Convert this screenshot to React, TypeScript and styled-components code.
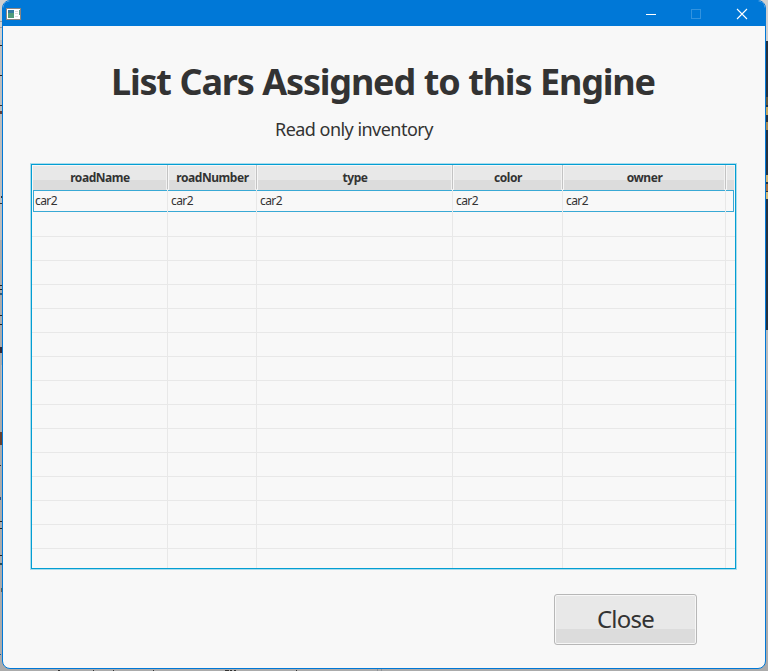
import React from "react";
import styled, { createGlobalStyle } from "styled-components";

const Global = createGlobalStyle`
  * { box-sizing: border-box; }
  body { margin: 0; overflow: hidden; background: #ababab; }
`;

const Desktop = styled.div`
  position: relative;
  width: 768px;
  height: 671px;
  padding: 0 2px 2px;
  overflow: hidden;
  background: #ababab;
  font-family: "Noto Sans", "Open Sans", sans-serif;
  color: #333;
`;

const Backdrop = styled.svg`
  position: absolute;
  inset: 0;
`;

const Window = styled.div`
  position: relative;
  display: flex;
  flex-direction: column;
  width: 764px;
  height: 669px;
  border: 1px solid #0078d7;
  border-radius: 8px;
  overflow: hidden;
  background: #f8f8f8;
`;

const TitleBar = styled.header`
  display: flex;
  align-items: center;
  justify-content: space-between;
  flex: none;
  height: 25px;
  padding-left: 3px;
  background: #0078d7;
`;

const Controls = styled.div`
  display: flex;
`;

const ControlButton = styled.button<{ $dim?: boolean }>`
  display: grid;
  place-items: center;
  width: ${(p) => (p.$dim ? "45px" : "46px")};
  height: 25px;
  padding: 0;
  border: 0;
  background: none;
  color: ${(p) => (p.$dim ? "#3293df" : "#fff")};
`;

const Content = styled.main`
  display: flex;
  flex-direction: column;
  flex: 1;
  padding-left: 28px;
`;

const Heading = styled.h1`
  width: max-content;
  margin: 31px 0 0 80px;
  font-size: 36px;
  line-height: 50px;
  font-weight: 700;
  letter-spacing: -1.2px;
  word-spacing: 0.6px;
  white-space: nowrap;
`;

const Note = styled.p`
  width: max-content;
  margin: 9px 0 0 244px;
  font-size: 18px;
  line-height: 26px;
  letter-spacing: -0.53px;
  white-space: nowrap;
`;

const Table = styled.div`
  display: flex;
  flex-direction: column;
  width: 705px;
  height: 405px;
  margin-top: 22px;
  border: 1px solid #039ed3;
  box-shadow: 0 0 0 1px #aadcec;
  overflow: hidden;
`;

const columns = "136px 89px 196px 110px 163px 9px";

const HeaderRow = styled.div`
  display: grid;
  grid-template-columns: ${columns};
  flex: none;
  height: 24px;
  border-bottom: 1px solid #c8c4c8;
`;

const HeaderCell = styled.div`
  padding-left: 1px;
  border-right: 1px solid #c3c3c3;
  box-shadow: inset 1px 1px #f7f7f7, inset -1px 0 #f2f2f2;
  background: linear-gradient(#e8e8e8 0 15px, #dcdcdc 15px);
  font-size: 12px;
  line-height: 25px;
  font-weight: 700;
  text-align: center;
  letter-spacing: -0.45px;
  &:last-child { border-right: 0; }
`;

const Row = styled.div<{ $focused?: boolean }>`
  display: grid;
  grid-template-columns: ${columns};
  flex: none;
  height: 24px;
  background: ${(p) =>
    p.$focused
      ? `linear-gradient(#39a9d5, #39a9d5) 1px 1px / 701px 1px no-repeat,
         linear-gradient(#39a9d5, #39a9d5) 1px 22px / 701px 1px no-repeat,
         linear-gradient(#39a9d5, #39a9d5) 1px 1px / 1px 22px no-repeat,
         linear-gradient(#39a9d5, #39a9d5) 701px 1px / 1px 22px no-repeat`
      : "linear-gradient(#e8e8e8, #e8e8e8) 0 23px / 100% 1px no-repeat"};
`;

const Cell = styled.div`
  padding-left: 3px;
  border-right: 1px solid #e8e8e8;
  font-size: 12px;
  line-height: 24px;
  letter-spacing: -0.6px;
  &:last-child { border-right: 0; }
`;

const CloseButton = styled.button`
  width: 143px;
  height: 51px;
  margin: 25px 0 0 523px;
  padding: 0 0 1px;
  border: 1px solid #b7b7b7;
  border-radius: 3px;
  box-shadow: inset 0 0 0 1px #f7f7f7;
  background: linear-gradient(#e8e8e8 0 34px, #dcdcdc 34px);
  color: #333;
  font-family: inherit;
  font-size: 24px;
  line-height: 46px;
  letter-spacing: -0.75px;
`;

const AppIcon = () => (
  <svg width="15" height="12" viewBox="0 0 15 12" shapeRendering="crispEdges">
    <path fill="#8a8582" d="M0 0h15v12H0z" />
    <path fill="#fff" d="M1 1h13v10H1z" />
    <path fill="#3379a0" d="M2 2h6v8H2z" />
    <path fill="#4f9b79" d="M2 5h6v5H2z" />
    <path fill="#ddd" d="M9 3h3v1H9zM9 5h3v1H9zM9 8h3v1H9z" />
    <path fill="#579b88" d="M13 2h1v5h-1z" />
  </svg>
);

const marks: [number, number, number, number, string][] = [
  [0, 21, 2, 1, "#999"], [0, 27, 2, 1, "#999"],
  [0, 45, 2, 1, "#222"], [0, 75, 2, 1, "#222"], [0, 105, 2, 1, "#333"],
  [0, 111, 2, 3, "#63403a"], [1, 196, 1, 2, "#333"], [0, 203, 2, 1, "#333"],
  [0, 259, 1, 5, "#9fb5b5"],
  [0, 285, 2, 1, "#222"], [0, 289, 2, 1, "#222"], [0, 293, 2, 2, "#325977"],
  [0, 315, 2, 1, "#222"], [0, 324, 2, 1, "#222"],
  [0, 347, 2, 6, "#342a35"], [1, 365, 1, 45, "#bcbcbc"],
  [0, 432, 2, 13, "#68412e"], [0, 465, 1, 1, "#333"],
  [0, 497, 1, 3, "#244f88"], [0, 521, 2, 1, "#222"], [0, 528, 2, 1, "#222"],
  [0, 555, 2, 1, "#222"], [0, 563, 2, 2, "#2c4b53"],
  [1, 588, 1, 4, "#665f51"], [0, 654, 1, 1, "#185b9c"],
  [58, 670, 2, 1, "#333"], [93, 670, 1, 1, "#333"], [113, 670, 1, 1, "#333"],
  [153, 670, 1, 1, "#333"], [225, 670, 4, 1, "#333"], [230, 670, 2, 1, "#333"],
  [234, 670, 2, 1, "#333"], [296, 670, 1, 1, "#333"],
  [377, 669, 1, 2, "#8c9196"], [381, 669, 1, 2, "#8c9196"],
  [766, 41, 2, 289, "#26323f"], [766, 97, 2, 8, "#66573a"],
  [766, 107, 2, 8, "#c6a55d"], [766, 122, 2, 8, "#aa8951"],
  [766, 175, 2, 7, "#d2b16b"], [766, 184, 2, 7, "#a76e3a"],
  [766, 192, 2, 7, "#d9bb76"],
];

const headers = ["roadName", "roadNumber", "type", "color", "owner", ""];
const blank = Array.from({ length: 15 });

export default function App() {
  return (
    <Desktop>
      <Global />
      <Backdrop width="768" height="671" shapeRendering="crispEdges">
        <path fill="#d0d0d0" d="M0 0h768v41h-4V20H4v20H0z" />
        <path fill="#bdbdbd" d="M0 40h3v200H0zM765 330h3v60h-3z" />
        {marks.map(([x, y, w, h, c], i) => (
          <rect key={i} x={x} y={y} width={w} height={h} fill={c} />
        ))}
      </Backdrop>
      <Window>
        <TitleBar>
          <AppIcon />
          <Controls>
            <ControlButton aria-label="Minimize">
              <svg width="12" height="12"><path d="M1 6.5h10" stroke="currentColor" /></svg>
            </ControlButton>
            <ControlButton $dim aria-label="Maximize">
              <svg width="11" height="12"><rect x="0.5" y="1.5" width="9" height="9" fill="none" stroke="currentColor" /></svg>
            </ControlButton>
            <ControlButton aria-label="Close window">
              <svg width="12" height="12"><path d="M1 1l10 10M11 1L1 11" stroke="currentColor" strokeWidth="1.1" /></svg>
            </ControlButton>
          </Controls>
        </TitleBar>
        <Content>
          <Heading>List Cars Assigned to this Engine</Heading>
          <Note>Read only inventory</Note>
          <Table>
            <HeaderRow>
              {headers.map((h, i) => <HeaderCell key={i}>{h}</HeaderCell>)}
            </HeaderRow>
            <Row $focused>
              {headers.map((h, i) => <Cell key={i}>{h ? "car2" : ""}</Cell>)}
            </Row>
            {blank.map((_, r) => (
              <Row key={r}>
                {headers.map((_, i) => <Cell key={i} />)}
              </Row>
            ))}
          </Table>
          <CloseButton>Close</CloseButton>
        </Content>
      </Window>
    </Desktop>
  );
}
